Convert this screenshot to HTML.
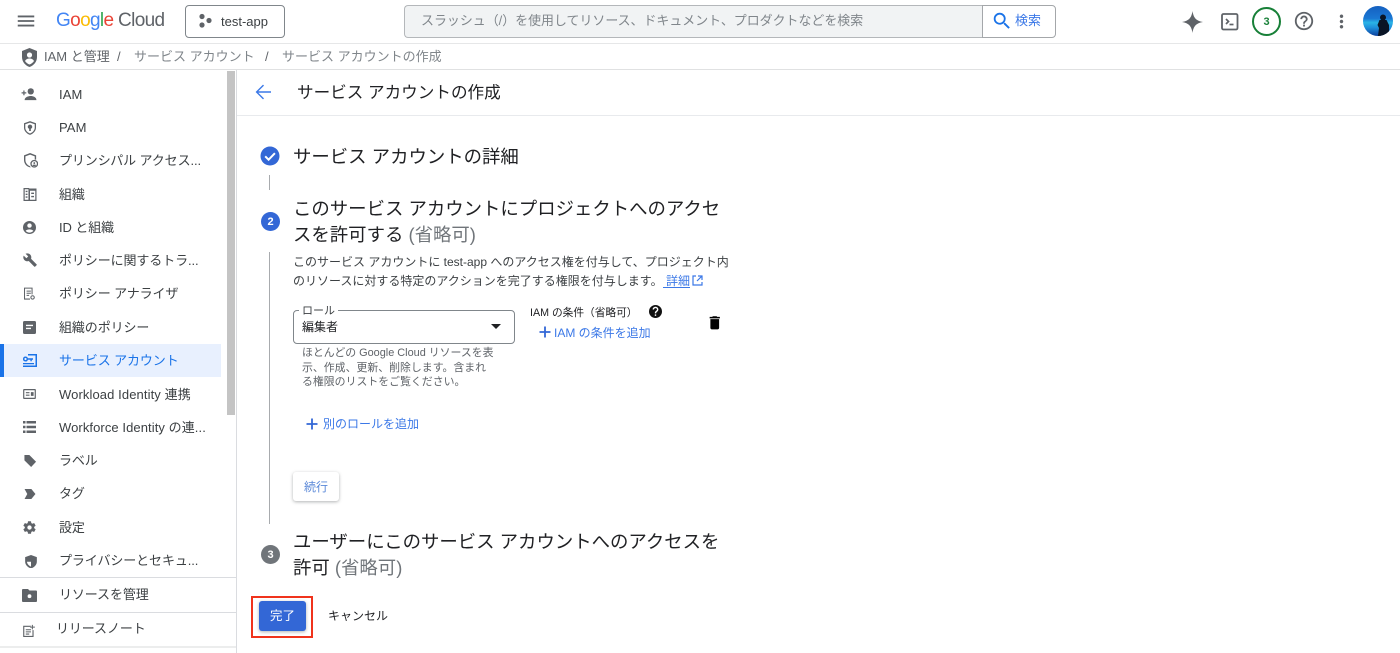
<!DOCTYPE html>
<html lang="ja"><head><meta charset="utf-8"><title>サービス アカウントの作成</title>
<style>
html,body{margin:0;padding:0;background:#fff}
body{width:1400px;height:653px;overflow:hidden;position:relative;font-family:"Liberation Sans","Noto Sans CJK JP",sans-serif;color:#202124}
.t{position:absolute;white-space:nowrap;line-height:20px}
.b{position:absolute}
svg{position:absolute;display:block}
.n{font-size:13px;color:#3c4043;left:59px;letter-spacing:-.1px}
.h{font-size:18.4px;color:#202124;line-height:26px}
.i{fill:#5f6368}
</style></head><body>

<!-- top bar -->
<div class="b" style="left:0;top:43px;width:1400px;height:1px;background:#e6e7e8"></div>
<svg style="left:15px;top:10px" width="22" height="22" viewBox="0 0 24 24"><path fill="#5f6368" d="M3 18h18v-2H3v2zm0-5h18v-2H3v2zm0-7v2h18V6H3z"/></svg>
<div class="t" style="left:56px;top:9px;font-size:19px;line-height:24px;letter-spacing:-.65px"><span style="color:#4285f4">G</span><span style="color:#ea4335">o</span><span style="color:#fbbc04">o</span><span style="color:#4285f4">g</span><span style="color:#34a853">l</span><span style="color:#ea4335">e</span> <span style="color:#5f6368">Cloud</span></div>
<div class="b" style="left:185px;top:5px;width:98px;height:31px;border:1px solid #80868b;border-radius:4px"></div>
<svg style="left:198px;top:13px" width="18" height="18" viewBox="0 0 18 18"><circle cx="4" cy="3.5" r="2.6" fill="#5f6368"/><circle cx="4" cy="12" r="2.6" fill="#5f6368"/><circle cx="11" cy="7.5" r="2.6" fill="#5f6368"/></svg>
<div class="t" style="left:221px;top:12px;font-size:13px;color:#3c4043">test-app</div>

<div class="b" style="left:404px;top:5px;width:578px;height:31px;background:#f1f3f4;border:1px solid #b4b7ba;border-right:0;border-radius:4px 0 0 4px"></div>
<div class="b" style="left:982px;top:5px;width:72px;height:31px;background:#fff;border:1px solid #a4a7aa;border-radius:0 4px 4px 0"></div>
<div class="t" style="left:421px;top:11px;font-size:12.94px;color:#80868b">スラッシュ（/）を使用してリソース、ドキュメント、プロダクトなどを検索</div>
<svg style="left:991px;top:10px" width="22" height="22" viewBox="0 0 24 24"><path fill="#1a73e8" d="M15.5 14h-.79l-.28-.27A6.47 6.47 0 0 0 16 9.5 6.5 6.5 0 1 0 9.5 16c1.61 0 3.09-.59 4.23-1.57l.27.28v.79l5 4.99L20.49 19l-4.99-5zm-6 0C7.01 14 5 11.99 5 9.5S7.01 5 9.5 5 14 7.01 14 9.5 11.99 14 9.5 14z"/></svg>
<div class="t" style="left:1015px;top:11px;font-size:13px;color:#3b78e7">検索</div>

<svg style="left:1182px;top:11px" width="21" height="22" viewBox="0 0 21 22"><path fill="#5f6368" d="M10.5 0C11.5 6.800 14 9.800 21 11 14 12.200 11.500 15.200 10.500 22 9.500 15.200 7 12.200 0 11 7 9.800 9.500 6.800 10.500 0z"/></svg>
<svg style="left:1221px;top:13px" width="18" height="18" viewBox="0 0 18 18"><rect x="1" y="1" width="15.500" height="15.500" rx="1.500" fill="none" stroke="#5f6368" stroke-width="1.800"/><path d="M5 6l2.500 2.500L5 11" fill="none" stroke="#5f6368" stroke-width="1.700"/><path d="M8.500 11.500h4" stroke="#5f6368" stroke-width="1.700"/></svg>
<div class="b" style="left:1252px;top:7px;width:25px;height:25px;border:2px solid #188038;border-radius:50%;text-align:center;font-size:11px;font-weight:700;line-height:26px;color:#188038">3</div>
<svg style="left:1293px;top:10px" width="22" height="22" viewBox="0 0 24 24"><path fill="#5f6368" d="M11 18h2v-2h-2v2zm1-16C6.480 2 2 6.480 2 12s4.480 10 10 10 10-4.480 10-10S17.520 2 12 2zm0 18c-4.410 0-8-3.590-8-8s3.590-8 8-8 8 3.590 8 8-3.590 8-8 8zm0-14c-2.210 0-4 1.790-4 4h2c0-1.100.9-2 2-2s2 .9 2 2c0 2-3 1.750-3 5h2c0-2.250 3-2.500 3-5 0-2.210-1.790-4-4-4z"/></svg>
<svg style="left:1330.500px;top:10.500px" width="21" height="21" viewBox="0 0 24 24"><path fill="#5f6368" d="M12 8c1.100 0 2-.9 2-2s-.9-2-2-2-2 .9-2 2 .9 2 2 2zm0 2c-1.100 0-2 .9-2 2s.9 2 2 2 2-.9 2-2-.9-2-2-2zm0 6c-1.100 0-2 .9-2 2s.9 2 2 2 2-.9 2-2-.9-2-2-2z"/></svg>
<svg style="left:1363px;top:6px" width="30" height="30" viewBox="0 0 30 30"><defs><linearGradient id="a" x1="0" y1="0" x2="0" y2="1"><stop offset="0" stop-color="#1560c0"/><stop offset=".42" stop-color="#1a78d4"/><stop offset=".55" stop-color="#2ab4e6"/><stop offset=".72" stop-color="#1e8fdc"/><stop offset="1" stop-color="#0b3f9c"/></linearGradient><clipPath id="c"><circle cx="15" cy="15" r="15"/></clipPath></defs><circle cx="15" cy="15" r="15" fill="url(#a)"/><g clip-path="url(#c)" fill="#0a1526"><circle cx="20" cy="11.500" r="3"/><path d="M16.500 14h7l2.500 5v11H15l1-8-1.500-3z"/></g></svg>

<!-- breadcrumb -->
<div class="b" style="left:0;top:69px;width:1400px;height:1px;background:#e0e1e2"></div>
<svg style="left:21px;top:48px" width="17" height="19" viewBox="0 0 17 19"><path fill="#5f6368" d="M8.500 0L16 3v6c0 4.700-3.200 8.500-7.500 10C4.200 17.500 1 13.700 1 9V3z"/><circle cx="8.500" cy="7" r="2.600" fill="#fff"/><path fill="#fff" d="M4 13c1-2 3-2.500 4.500-2.500S12 11 13 13c-1 1.500-2.800 3-4.500 3.500C6.800 16 5 14.500 4 13z"/></svg>
<div class="t" style="left:44px;top:47px;font-size:13px;color:#5f6368">IAM と管理</div>
<div class="t" style="left:117px;top:47px;font-size:13px;color:#5f6368">/</div>
<div class="t" style="left:134px;top:47px;font-size:13px;color:#80868b">サービス アカウント</div>
<div class="t" style="left:265px;top:47px;font-size:13px;color:#5f6368">/</div>
<div class="t" style="left:282px;top:47px;font-size:13px;color:#80868b">サービス アカウントの作成</div>

<!-- sidebar -->
<div class="b" style="left:236px;top:70px;width:1px;height:583px;background:#dadce0"></div>
<div class="b" style="left:227px;top:71px;width:8px;height:344px;background:#c4c4c4"></div>
<div class="b" style="left:0;top:344px;width:221px;height:33px;background:#e8f0fe"></div>
<div class="b" style="left:0;top:344px;width:4px;height:33px;background:#1a73e8"></div>

<div class="t n" style="top:85px;letter-spacing:.1px">IAM</div>
<div class="t n" style="top:118px;letter-spacing:.1px">PAM</div>
<div class="t n" style="top:151px">プリンシパル アクセス...</div>
<div class="t n" style="top:185px">組織</div>
<div class="t n" style="top:218px">ID と組織</div>
<div class="t n" style="top:251px">ポリシーに関するトラ...</div>
<div class="t n" style="top:284px">ポリシー アナライザ</div>
<div class="t n" style="top:318px">組織のポリシー</div>
<div class="t n" style="top:351px;color:#1a73e8">サービス アカウント</div>
<div class="t n" style="top:385px;letter-spacing:.1px">Workload Identity 連携</div>
<div class="t n" style="top:418px;letter-spacing:.08px">Workforce Identity の連...</div>
<div class="t n" style="top:451px">ラベル</div>
<div class="t n" style="top:484px">タグ</div>
<div class="t n" style="top:518px">設定</div>
<div class="t n" style="top:551px">プライバシーとセキュ...</div>
<div class="t n" style="top:585px">リソースを管理</div>
<div class="t n" style="top:619px;left:56px">リリースノート</div>

<!-- sidebar icons -->
<svg class="i" style="left:21px;top:87px" width="16" height="14" viewBox="0 0 17 16"><circle cx="10.500" cy="5" r="3.600"/><path d="M3.500 15c0-3.500 4.500-4.700 7-4.700s6.500 1.200 6.500 4.700zM0 6h2V4h1.400v2h2v1.400h-2v2H2v-2H0z"/></svg>
<svg class="i" style="left:24px;top:121px" width="12" height="14" viewBox="0 0 14 16"><path fill-rule="evenodd" d="M7 0l7 2.500v5c0 3.800-3 7-7 8.500-4-1.500-7-4.700-7-8.500v-5zM7 1.800L1.500 3.600v3.900c0 3 2.300 5.500 5.500 6.900 3.200-1.400 5.500-3.900 5.500-6.900V3.600zM7 4a2.600 2.600 0 0 1 1 5v2.500H6V9A2.600 2.600 0 0 1 7 4z"/></svg>
<svg class="i" style="left:24px;top:153px" width="14" height="15" viewBox="0 0 15 16"><path fill-rule="evenodd" d="M6.500 0L13 2.500V7h-1.500V3.600L6.500 1.700 1.500 3.600V7.500c0 3 2 5.500 5 6.700l.6 1.300C3 15 0 11.500 0 7.500v-5z"/><circle cx="11" cy="11.500" r="3.500" fill="none" stroke="#5f6368" stroke-width="1.400"/><circle cx="11" cy="10.700" r="1"/><path d="M9 13c.6-.7 3.400-.7 4 0l-1 1h-2z"/></svg>
<svg class="i" style="left:23px;top:188px" width="14" height="13" viewBox="0 0 14 14"><path fill-rule="evenodd" d="M0 0h6.500v1H7v-.5h7V14H0zM1.300 1.300v11.400h4V1.300zM7 3v9.700h5.700V3zM2.300 3h2v1.500h-2zM2.300 6h2v1.500h-2zM2.300 9h2v1.500h-2zM8.300 5h3v1.500h-3zM8.300 8.500h3V10h-3z"/></svg>
<svg class="i" style="left:23px;top:221px" width="13" height="13" viewBox="0 0 14 14"><path fill-rule="evenodd" d="M7 0a7 7 0 1 1 0 14A7 7 0 0 1 7 0zm0 2.500a2.400 2.400 0 1 0 0 4.800 2.400 2.400 0 0 0 0-4.800zM2.800 10.700C4 12 5.500 12.500 7 12.500s3-.5 4.200-1.800C10.500 9.500 8.500 9 7 9s-3.500.5-4.200 1.700z"/></svg>
<svg class="i" style="left:23px;top:253px" width="14" height="14" viewBox="0 0 24 24"><path transform="translate(-.5 -.5) scale(1.050)" d="M22.700 19l-9.100-9.100c.9-2.300.4-5-1.500-6.900-2-2-5-2.400-7.400-1.300L9 6 6 9 1.600 4.700C.4 7.100.9 10.100 2.900 12.100c1.900 1.900 4.600 2.400 6.900 1.500l9.100 9.100c.4.400 1 .4 1.400 0l2.300-2.300c.5-.4.500-1.100.1-1.400z"/></svg>
<svg class="i" style="left:24px;top:287px" width="12" height="14" viewBox="0 0 14 15"><path fill-rule="evenodd" d="M0 0h10v8H8.800V1.200H1.200v11.600H7V14H0zM3 3.500h5v1.200H3zM3 6h5v1.200H3zM3 8.500h3v1.200H3z"/><circle cx="10" cy="11.500" r="2" fill="none" stroke="#5f6368" stroke-width="1.200"/></svg>
<svg class="i" style="left:23px;top:321px" width="13" height="13" viewBox="0 0 13 13"><path fill-rule="evenodd" d="M1.500 0h10A1.500 1.500 0 0 1 13 1.500v10a1.500 1.500 0 0 1-1.500 1.500h-10A1.500 1.500 0 0 1 0 11.500v-10A1.500 1.500 0 0 1 1.500 0zM3 3.800v1.300h7V3.800zM3 6.800v1.300h5V6.800z"/></svg>
<svg style="left:23px;top:354px" width="14" height="13" viewBox="0 0 14 13" fill="#1a73e8"><path fill-rule="evenodd" d="M5 0h9v13H0v-1.500h12.500v-10H5zM2.500 2.500a2.500 2.500 0 0 1 2.400 1.800H10v1.400H8.800v1.600H7.400V5.700H4.900A2.500 2.500 0 1 1 2.500 2.500zm0 1.400a1.100 1.100 0 1 0 0 2.200 1.100 1.100 0 0 0 0-2.200zM0 9h11v1.200H0z"/></svg>
<svg class="i" style="left:23px;top:389px" width="13" height="10" viewBox="0 0 14 11"><path fill-rule="evenodd" d="M1 0h12a1 1 0 0 1 1 1v9a1 1 0 0 1-1 1H1a1 1 0 0 1-1-1V1a1 1 0 0 1 1-1zm.3 1.400v8.200h11.400V1.400zM3 3.500h4v1.200H3zM3 6.200h4v1.200H3zM8.500 3.500h3v4h-3z"/></svg>
<svg class="i" style="left:23px;top:421px" width="13" height="12" viewBox="0 0 13 12"><path d="M0 0h2.500v2.500H0zM3.500 0H13v2.500H3.500zM0 4.700h2.500v2.600H0zM3.500 4.700H13v2.600H3.500zM0 9.500h2.500V12H0zM3.500 9.500H13V12H3.500z"/></svg>
<svg class="i" style="left:24px;top:455px" width="12.500" height="12.500" viewBox="0 0 13 14"><path d="M0 0h5.500L13 7.500 7.500 13.500 0 6z"/></svg>
<svg class="i" style="left:24px;top:489px" width="12" height="10" viewBox="0 0 12 11"><path d="M0 0h7.500L12 5.500 7.500 11H0l3-5.500z"/></svg>
<svg class="i" style="left:22px;top:520px" width="15" height="15" viewBox="0 0 24 24"><path d="M19.430 12.980c.04-.32.07-.64.07-.98s-.03-.66-.07-.98l2.110-1.650c.19-.15.24-.42.12-.64l-2-3.460c-.12-.22-.39-.3-.61-.22l-2.490 1c-.52-.4-1.080-.73-1.690-.98l-.38-2.650C14.460 2.180 14.250 2 14 2h-4c-.25 0-.46.18-.49.42l-.38 2.650c-.61.25-1.170.59-1.690.98l-2.490-1c-.23-.09-.49 0-.61.22l-2 3.460c-.13.22-.07.49.12.64l2.110 1.650c-.04.32-.07.65-.07.98s.03.66.07.98l-2.110 1.650c-.19.15-.24.42-.12.64l2 3.460c.12.22.39.3.61.22l2.490-1c.52.4 1.080.73 1.690.98l.38 2.650c.03.24.24.42.49.42h4c.25 0 .46-.18.49-.42l.38-2.650c.61-.25 1.170-.59 1.690-.98l2.490 1c.23.09.49 0 .61-.22l2-3.460c.12-.22.07-.49-.12-.64l-2.110-1.650zM12 15.500c-1.930 0-3.500-1.570-3.500-3.500s1.570-3.500 3.500-3.500 3.500 1.570 3.500 3.500-1.570 3.500-3.500 3.500z"/></svg>
<svg class="i" style="left:24.500px;top:554.500px" width="12" height="13.500" viewBox="0 0 13 15"><path fill-rule="evenodd" d="M6.500 0L13 2.300v5c0 3.400-2.700 6.300-6.500 7.700C2.700 13.600 0 10.700 0 7.300v-5zM6.500 2v5.500H2c.2 2.400 2.100 4.400 4.500 5.400z"/></svg>
<svg class="i" style="left:22px;top:589px" width="15" height="13" viewBox="0 0 15 13"><path fill-rule="evenodd" d="M1 0h5l1.500 1.500H14a1 1 0 0 1 1 1V12a1 1 0 0 1-1 1H1a1 1 0 0 1-1-1V1a1 1 0 0 1 1-1zm6.500 5.300a1.900 1.900 0 1 0 0 3.800 1.900 1.900 0 0 0 0-3.800z"/></svg>
<svg class="i" style="left:23px;top:624px" width="12.500" height="13" viewBox="0 0 14 15"><path fill-rule="evenodd" d="M0 2h9v1.300H1.300v10.400h9.400V7H12v8H0zM3 6h6v1.200H3zM3 8.500h6v1.200H3zM3 11h4v1.200H3zM10 1h1.200v2H13.500v1.200h-2.300v2H10v-2H8V3h2z"/></svg>

<div class="b" style="left:0;top:577px;width:236px;height:1px;background:#dadce0"></div>
<div class="b" style="left:0;top:612px;width:236px;height:1px;background:#dadce0"></div>
<div class="b" style="left:0;top:646px;width:236px;height:2px;background:#eceded"></div>

<!-- page header -->
<div class="b" style="left:237px;top:115px;width:1163px;height:1px;background:#e8eaed"></div>
<svg style="left:251px;top:80px" width="24" height="24" viewBox="0 0 24 24"><path fill="#3b78e7" d="M20 11.300H7.300l5.700-5.700-1-1L4.600 12l7.400 7.400 1-1-5.700-5.700H20z"/></svg>
<div class="t" style="left:297px;top:83px;font-size:16.6px;color:#202124">サービス アカウントの作成</div>

<!-- step 1 -->
<svg style="left:260px;top:146px" width="20" height="20" viewBox="0 0 20 20"><circle cx="10" cy="10" r="9.500" fill="#3367d6"/><path d="M5.200 10.300l3.400 3.400 6.300-6.500" fill="none" stroke="#fff" stroke-width="2"/></svg>
<div class="t h" style="left:293px;top:144px">サービス アカウントの詳細</div>
<div class="b" style="left:269px;top:175px;width:1px;height:15px;background:#a8abae"></div>

<!-- step 2 -->
<div class="b" style="left:261px;top:212px;width:19px;height:19px;border-radius:50%;background:#3367d6;color:#fff;text-align:center;font-size:11px;font-weight:700;line-height:20px">2</div>
<div class="t h" style="left:293px;top:196px">このサービス アカウントにプロジェクトへのアクセ</div>
<div class="t h" style="left:293px;top:222px">スを許可する <span style="color:#70757a">(省略可)</span></div>
<div class="b" style="left:269px;top:252px;width:1px;height:272px;background:#a8abae"></div>
<div class="t" style="left:293px;top:252px;font-size:12px;color:#3c4043">このサービス アカウントに test-app へのアクセス権を付与して、プロジェクト内</div>
<div class="t" style="left:293px;top:271px;font-size:12px;color:#3c4043">のリソースに対する特定のアクションを完了する権限を付与します。</div>
<div class="t" style="left:666px;top:271px;font-size:12px;color:#3b78e7">詳細</div>
<div class="b" style="left:663px;top:287px;width:27px;height:1px;background:#3b78e7"></div>
<svg style="left:692px;top:275px" width="11" height="11" viewBox="0 0 11 11"><path d="M4 1H1v9h9V7M6 1h4v4M10 1L5 6" fill="none" stroke="#3b78e7" stroke-width="1.200"/></svg>

<!-- role field -->
<div class="b" style="left:293px;top:310px;width:220px;height:32px;border:1px solid #80868b;border-radius:4px"></div>
<div class="t" style="left:299px;top:304px;padding:0 3px;background:#fff;font-size:11px;line-height:15px;color:#3c4043">ロール</div>
<div class="t" style="left:302px;top:317px;font-size:12px;color:#202124">編集者</div>
<div class="b" style="left:491px;top:324px;width:0;height:0;border-left:5.500px solid transparent;border-right:5.500px solid transparent;border-top:5.500px solid #202124"></div>
<div class="t" style="left:302px;top:346px;font-size:10.900px;line-height:15px;color:#5f6368">ほとんどの Google Cloud リソースを表</div>
<div class="t" style="left:302px;top:361px;font-size:10.900px;line-height:15px;color:#5f6368">示、作成、更新、削除します。含まれ</div>
<div class="t" style="left:302px;top:375px;font-size:10.900px;line-height:15px;color:#5f6368">る権限のリストをご覧ください。</div>

<div class="t" style="left:530px;top:303px;font-size:10.700px;color:#202124">IAM の条件（省略可）</div>
<svg style="left:649px;top:305px" width="13" height="13" viewBox="0 0 24 24"><path fill="#111" d="M12 0a12 12 0 1 0 0 24 12 12 0 0 0 0-24zm1.300 20h-2.600v-2.600h2.600zm2.700-8.500c-1 1-2.700 1.800-2.700 4h-2.600c0-3.500 1.900-4.300 3-5.400.6-.6 1-1.100 1-2 0-1.300-1.200-2.400-2.700-2.400S9.300 6.800 9.300 8.300H6.700c0-2.900 2.400-5 5.300-5s5.300 2.100 5.300 5c0 1.200-.5 2.300-1.300 3.200z"/></svg>
<svg style="left:538px;top:325px" width="14" height="14" viewBox="0 0 14 14"><path d="M7 1.500v11M1.500 7h11" stroke="#3367d6" stroke-width="1.800"/></svg>
<div class="t" style="left:554px;top:323px;font-size:12px;color:#3b78e7">IAM の条件を追加</div>
<svg style="left:705.500px;top:314px" width="17.500" height="17.500" viewBox="0 0 24 24"><path fill="#000" d="M6 19c0 1.100.9 2 2 2h8c1.100 0 2-.9 2-2V7H6v12zM19 4h-3.500l-1-1h-5l-1 1H5v2h14V4z"/></svg>

<svg style="left:305px;top:417px" width="14" height="14" viewBox="0 0 14 14"><path d="M7 1.500v11M1.500 7h11" stroke="#3367d6" stroke-width="1.800"/></svg>
<div class="t" style="left:323px;top:414px;font-size:12px;color:#3b78e7">別のロールを追加</div>

<div class="b" style="left:293px;top:472px;width:46px;height:29px;border-radius:3px;background:#fff;box-shadow:0 1px 3px rgba(60,64,67,.4)"></div>
<div class="t" style="left:304px;top:477px;font-size:12px;color:#5a88d8">続行</div>

<!-- step 3 -->
<div class="b" style="left:261px;top:545px;width:19px;height:19px;border-radius:50%;background:#70757a;color:#fff;text-align:center;font-size:11px;font-weight:700;line-height:20px">3</div>
<div class="t h" style="left:293px;top:529px">ユーザーにこのサービス アカウントへのアクセスを</div>
<div class="t h" style="left:293px;top:555px">許可 <span style="color:#70757a">(省略可)</span></div>

<!-- actions -->
<div class="b" style="left:251px;top:596px;width:58px;height:38px;border:2px solid #f0331c"></div>
<div class="b" style="left:259px;top:601px;width:47px;height:30px;border-radius:3px;background:#3367d6;box-shadow:0 1px 3px rgba(60,64,67,.4)"></div>
<div class="t" style="left:270px;top:606px;font-size:12.500px;color:#fff">完了</div>
<div class="t" style="left:328px;top:606px;font-size:12px;color:#202124">キャンセル</div>
</body></html>
